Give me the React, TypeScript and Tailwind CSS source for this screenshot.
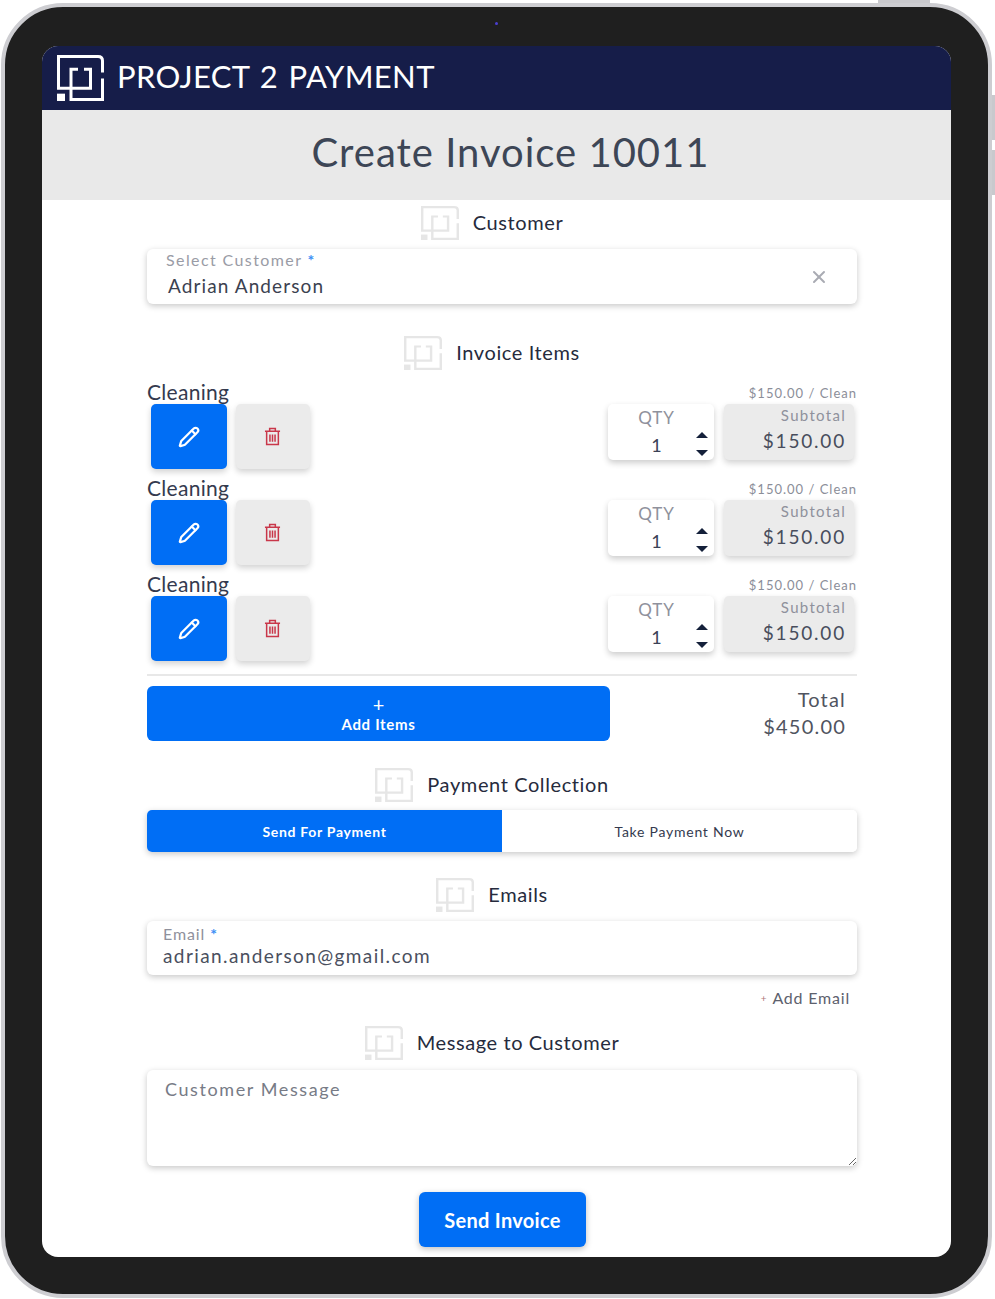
import { Pencil, X } from "lucide-react";

function Logo({ className, color }: { className: string; color: string }) {
  return (
    <svg viewBox="0 0 47 47" preserveAspectRatio="none" className={className} fill="none" stroke={color} strokeWidth="3">
      <path d="M1.5 34V1.5H41Q45.5 1.5 45.5 6V18" />
      <path d="M45.5 24V45.5H14V14.5H21" />
      <path d="M27 14.5H33.5V34H0" />
      <rect x="0" y="39.5" width="8" height="7.5" fill={color} stroke="none" />
    </svg>
  );
}

function SectionTitle({ title, top }: { title: string; top: string }) {
  return (
    <div className={`flex h-[34px] items-center justify-center gap-[14px] pr-[20px] ${top}`}>
      <Logo className="h-[34px] w-[38px]" color="#e6e6e6" />
      <span className="pb-[2px] text-[20px] leading-none tracking-[0.6px] text-[#262b3d]">{title}</span>
    </div>
  );
}

function TrashIcon() {
  return (
    <svg viewBox="0 0 18 20" className="h-[19px] w-[17px]" fill="none" stroke="#c9374a" strokeWidth="1.6">
      <path d="M1 4.5H17M6 4.5V1.5H12V4.5M2.8 4.5V18.5H15.2V4.5" />
      <path d="M6.3 8V15.5M9 8V15.5M11.7 8V15.5" />
    </svg>
  );
}

function InvoiceItem() {
  return (
    <div className="mb-[7px]">
      <div className="flex h-[24px] items-center justify-between">
        <span className="pb-[2px] text-[21px] leading-none tracking-[0.3px] text-[#343a4e]">Cleaning</span>
        <span className="pt-[2px] text-[13px] leading-none tracking-[1px] text-[#8b8e99]">$150.00 / Clean</span>
      </div>
      <div className="flex items-start pl-[4px] pr-[3px]">
        <button className="flex h-[65px] w-[76px] items-center justify-center rounded-[5px] bg-[#006ef5] shadow-[0_3px_6px_rgba(0,0,0,0.18)]">
          <Pencil className="h-[22px] w-[22px] text-white" strokeWidth={2.4} />
        </button>
        <button className="ml-[9px] flex h-[65px] w-[74px] items-center justify-center rounded-[5px] bg-[#ebebeb] pr-[2px] shadow-[0_3px_6px_rgba(0,0,0,0.18)]">
          <TrashIcon />
        </button>
        <div className="ml-auto flex h-[56px] w-[106px] rounded-[5px] bg-white shadow-[0_3px_6px_rgba(0,0,0,0.2)]">
          <div className="flex w-[84px] flex-col items-center pl-[13px] pt-[4px]">
            <span className="text-[17px] leading-[20px] tracking-[1px] text-[#8f919c]">QTY</span>
            <span className="mt-[6px] text-[18px] leading-[22px] text-[#3b4256]">1</span>
          </div>
          <div className="flex flex-1 flex-col items-center gap-[12px] pr-[2px] pt-[28px]">
            <span className="h-0 w-0 border-x-[6px] border-b-[6px] border-x-transparent border-b-[#14203a]" />
            <span className="h-0 w-0 border-x-[6px] border-t-[6px] border-x-transparent border-t-[#14203a]" />
          </div>
        </div>
        <div className="ml-[10px] flex h-[56px] w-[130px] flex-col items-end rounded-[5px] bg-[#ebebeb] pr-[8px] pt-[1px] shadow-[0_3px_6px_rgba(0,0,0,0.18)]">
          <span className="text-[15px] leading-[20px] tracking-[1.3px] text-[#8f919c]">Subtotal</span>
          <span className="mt-[4px] text-[19px] leading-[24px] tracking-[1.8px] text-[#484d5c]">$150.00</span>
        </div>
      </div>
    </div>
  );
}

export default function App() {
  return (
    <div className="relative h-[1299px] w-[995px] overflow-hidden bg-white pl-[1px] pt-[3px] font-[Lato,sans-serif]">
      {/* hardware buttons */}
      <div className="absolute left-[878px] top-0 h-[3px] w-[52px] bg-[#c9c9cd]" />
      <div className="absolute left-[991px] top-[95px] h-[45px] w-[4px] bg-[#c9c9cd]" />
      <div className="absolute left-[991px] top-[150px] h-[45px] w-[4px] bg-[#c9c9cd]" />

      <div className="relative h-[1295px] w-[991px] rounded-[62px] border-4 border-[#cdcdd1] bg-[#1f1f1f] pl-[37px] pt-[39px]">
        <div className="absolute left-[490px] top-[15px] h-[3px] w-[3px] rounded-full bg-[#4b3fd0]" />

        <div className="h-[1211px] w-[909px] overflow-hidden rounded-[16px] bg-white">
          <header className="flex h-[64px] items-center bg-[#161d49] pl-[15px]">
            <Logo className="mb-[1px] h-[46px] w-[47px]" color="#ffffff" />
            <span className="ml-[13px] pb-[3px] text-[31px] leading-none tracking-[0.35px] text-white [word-spacing:2px]">
              PROJECT 2 PAYMENT
            </span>
          </header>
          <div className="flex h-[90px] items-center justify-center bg-[#e9e9e9] pb-[6px] pl-[28px]">
            <h1 className="text-[40px] font-normal leading-none tracking-[1px] text-[#3d4656]">Create Invoice 10011</h1>
          </div>

          <main className="ml-[105px] w-[710px]">
            <SectionTitle title="Customer" top="mt-[6px]" />
            <div className="relative mt-[9px] h-[55px] rounded-[6px] bg-white pl-[19px] pt-[2px] shadow-[0_2px_6px_rgba(0,0,0,0.22)]">
              <div className="text-[16px] leading-[18px] tracking-[1.4px] text-[#9a9ca6]">
                Select Customer <span className="font-bold text-[#3b8ef5]">*</span>
              </div>
              <div className="ml-[2px] mt-[6px] text-[19px] leading-[22px] tracking-[1.1px] text-[#3b4150]">Adrian Anderson</div>
              <X className="absolute right-[28px] top-[18px] h-[20px] w-[20px] text-[#a9abb3]" strokeWidth={2.4} />
            </div>

            <SectionTitle title="Invoice Items" top="mt-[32px]" />
            <div className="mt-[10px]">
              <InvoiceItem />
              <InvoiceItem />
              <InvoiceItem />
            </div>

            <div className="mt-[13px] h-[2px] bg-[#e8e8e8]" />
            <div className="mt-[10px] flex items-start justify-between pr-[11px]">
              <button className="flex h-[55px] w-[463px] flex-col items-center justify-center rounded-[6px] bg-[#006ef5] text-white">
                <span className="text-[20px] leading-[20px]">+</span>
                <span className="text-[15px] font-bold leading-[20px] tracking-[0.7px]">Add Items</span>
              </button>
              <div className="flex flex-col items-end text-[20px] leading-[27px] tracking-[1.2px] text-[#50545f]">
                <span>Total</span>
                <span>$450.00</span>
              </div>
            </div>

            <SectionTitle title="Payment Collection" top="mt-[27px]" />
            <div className="mt-[8px] flex h-[42px] overflow-hidden rounded-[5px] shadow-[0_2px_6px_rgba(0,0,0,0.22)]">
              <button className="flex-1 bg-[#006ef5] text-[14px] font-bold tracking-[0.7px] text-white">Send For Payment</button>
              <button className="flex-1 bg-white text-[14px] tracking-[0.75px] text-[#343a4e]">Take Payment Now</button>
            </div>

            <SectionTitle title="Emails" top="mt-[26px]" />
            <div className="mt-[9px] h-[54px] rounded-[6px] bg-white pl-[16px] pt-[4px] shadow-[0_2px_6px_rgba(0,0,0,0.22)]">
              <div className="text-[16px] leading-[18px] tracking-[0.9px] text-[#8f919c]">
                Email <span className="font-bold text-[#3b8ef5]">*</span>
              </div>
              <div className="mt-[2px] text-[19px] leading-[22px] tracking-[1.4px] text-[#4a4f5e]">adrian.anderson@gmail.com</div>
            </div>
            <div className="mt-[13px] flex h-[20px] items-center justify-end gap-[5px] pr-[7px] text-[16px] tracking-[0.8px] text-[#5d616d]">
              <span className="text-[10px] text-[#b0777c]">+</span>
              <span>Add Email</span>
            </div>

            <SectionTitle title="Message to Customer" top="mt-[18px]" />
            <textarea
              placeholder="Customer Message"
              className="mt-[10px] block h-[96px] min-h-[96px] w-full rounded-[6px] bg-white pl-[18px] pt-[7px] text-[18px] leading-[24px] tracking-[1.6px] text-[#777b86] shadow-[0_2px_6px_rgba(0,0,0,0.22)] outline-none placeholder:text-[#777b86]"
            />
            <div className="mt-[26px] flex justify-center pl-[1px]">
              <button className="h-[55px] w-[167px] rounded-[6px] bg-[#006ef5] text-[20px] font-bold tracking-[0.3px] text-white shadow-[0_2px_6px_rgba(0,0,0,0.25)]">
                Send Invoice
              </button>
            </div>
          </main>
        </div>
      </div>
    </div>
  );
}
